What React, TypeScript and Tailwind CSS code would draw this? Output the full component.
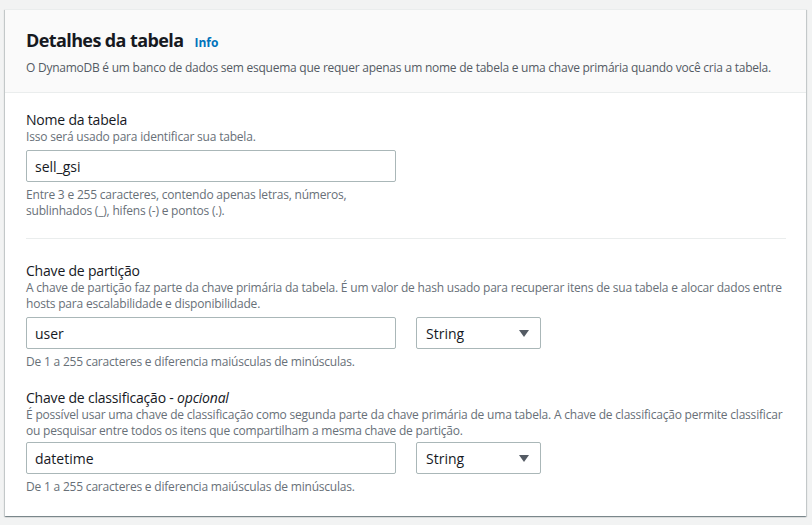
import React from "react";

const font = { fontFamily: '"Open Sans", "Noto Sans", Arial, sans-serif' };

const Caret = () => (
  <svg width="10" height="7" viewBox="0 0 10 7" className="shrink-0">
    <path d="M0 0h10L5 7z" fill="#545b64" />
  </svg>
);

const TextInput = ({ value }: { value: string }) => (
  <div className="flex h-[32px] w-[370px] items-center rounded-[2px] border border-[#aab7b8] bg-white pl-[8px] text-[14px] text-[#16191f]">
    {value}
  </div>
);

const TypeSelect = () => (
  <div className="ml-[20px] flex h-[32px] w-[125px] items-center justify-between rounded-[2px] border border-[#aab7b8] bg-white pl-[9px] pr-[11px] text-[14px] text-[#16191f]">
    <span>String</span>
    <Caret />
  </div>
);

const Label = ({ children }: { children: React.ReactNode }) => (
  <div className="text-[14px] leading-[18px] tracking-[-0.2px] text-[#16191f]">{children}</div>
);

const Desc = ({ children }: { children: React.ReactNode }) => (
  <div className="text-[12px] leading-[16px] tracking-[-0.2px] text-[#687078]">{children}</div>
);

export default function App() {
  return (
    <div className="min-h-[525px] w-[812px] bg-[#f2f3f3] pt-[9px] pl-[5px]" style={font}>
      <div className="w-[801px] border-t border-[#eaeded] bg-white shadow-[0_1px_1px_0_rgba(0,28,36,0.3),1px_1px_1px_0_rgba(0,28,36,0.15),-1px_1px_1px_0_rgba(0,28,36,0.15)]">
        {/* header */}
        <div className="border-b border-[#eaeded] bg-[#fafafa] px-[21px] pt-[19px] pb-[16px]">
          <div className="flex items-baseline">
            <h2 className="text-[18px] font-bold leading-[22px] tracking-[-0.6px] text-[#16191f]">
              Detalhes da tabela
            </h2>
            <span className="ml-[11px] text-[12px] font-bold text-[#0073bb]">Info</span>
          </div>
          <p className="mt-[8px] text-[12px] leading-[16px] tracking-[-0.25px] text-[#545b64]">
            O DynamoDB é um banco de dados sem esquema que requer apenas um nome de tabela e uma chave primária quando você cria a tabela.
          </p>
        </div>

        {/* body */}
        <div className="pl-[21px] pr-[20px]">
          <div className="border-b border-[#eaeded] pt-[18px] pb-[19px]">
            <Label>Nome da tabela</Label>
            <Desc>Isso será usado para identificar sua tabela.</Desc>
            <div className="mt-[5px]">
              <TextInput value="sell_gsi" />
            </div>
            <div className="mt-[5px] w-[370px]">
              <Desc>Entre 3 e 255 caracteres, contendo apenas letras, números, sublinhados (_), hifens (-) e pontos (.).</Desc>
            </div>
          </div>

          <div className="pt-[23px]">
            <Label>Chave de partição</Label>
            <Desc>
              A chave de partição faz parte da chave primária da tabela. É um valor de hash usado para recuperar itens de sua tabela e alocar dados entre hosts para escalabilidade e disponibilidade.
            </Desc>
            <div className="mt-[5px] flex">
              <TextInput value="user" />
              <TypeSelect />
            </div>
            <div className="mt-[5px]">
              <Desc>De 1 a 255 caracteres e diferencia maiúsculas de minúsculas.</Desc>
            </div>
          </div>

          <div className="pt-[19px] pb-[21px]">
            <Label>
              Chave de classificação - <i>opcional</i>
            </Label>
            <Desc>
              É possível usar uma chave de classificação como segunda parte da chave primária de uma tabela. A chave de classificação permite classificar ou pesquisar entre todos os itens que compartilham a mesma chave de partição.
            </Desc>
            <div className="mt-[3px] flex">
              <TextInput value="datetime" />
              <TypeSelect />
            </div>
            <div className="mt-[5px]">
              <Desc>De 1 a 255 caracteres e diferencia maiúsculas de minúsculas.</Desc>
            </div>
          </div>
        </div>
      </div>
    </div>
  );
}
